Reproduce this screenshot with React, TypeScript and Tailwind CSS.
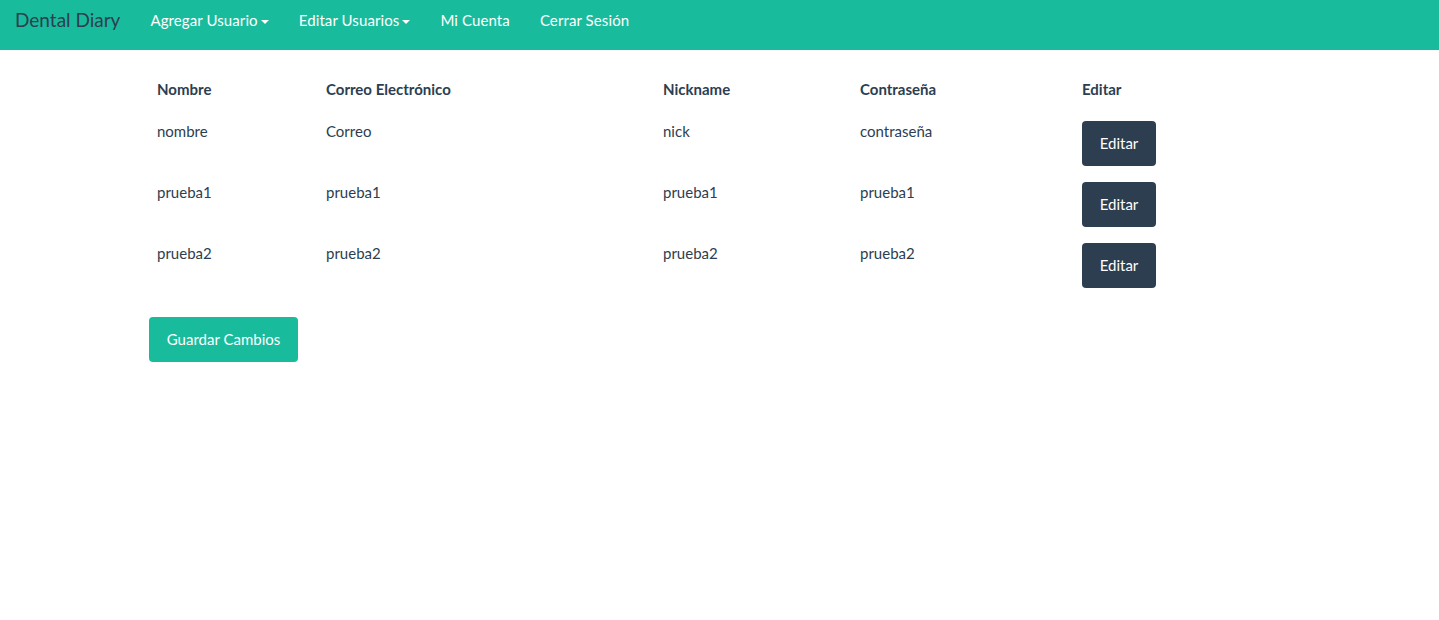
const usuarios = [
  { nombre: "nombre", correo: "Correo", nick: "nick", pass: "contraseña" },
  { nombre: "prueba1", correo: "prueba1", nick: "prueba1", pass: "prueba1" },
  { nombre: "prueba2", correo: "prueba2", nick: "prueba2", pass: "prueba2" },
];

function Caret() {
  return (
    <span className="ml-[3px] inline-block h-0 w-0 border-x-[4px] border-t-[4px] border-x-transparent border-t-white align-middle" />
  );
}

export default function App() {
  return (
    <div className="min-h-[620px] bg-white font-['Lato','Liberation_Sans',sans-serif] text-[15px] leading-[21px] text-[#2c3e50]">
      <nav className="flex h-[50px] bg-[#18bc9c]">
        <a className="block px-[15px] pt-[9px] text-[19px] leading-[22px] text-[#2c3e50]">Dental Diary</a>
        <ul className="flex tracking-[0.1px]">
          <li className="px-[15px] pt-[10px] leading-[20px] text-white">
            Agregar Usuario<Caret />
          </li>
          <li className="px-[15px] pt-[10px] leading-[20px] text-white">
            Editar Usuarios<Caret />
          </li>
          <li className="px-[15px] pt-[10px] leading-[20px] text-white">Mi Cuenta</li>
          <li className="px-[15px] pt-[10px] leading-[20px] text-white">Cerrar Sesión</li>
        </ul>
      </nav>

      <div className="mx-auto w-[1171px] px-[15px] pt-[21px]">
        <table className="mb-[21px] w-full border-collapse text-left">
          <thead>
            <tr>
              <th className="w-[169px] px-2 pb-[13px] pt-2 font-bold">Nombre</th>
              <th className="w-[337px] px-2 pb-[13px] pt-2 font-bold">Correo Electrónico</th>
              <th className="w-[197px] px-2 pb-[13px] pt-2 font-bold">Nickname</th>
              <th className="w-[222px] px-2 pb-[13px] pt-2 font-bold">Contraseña</th>
              <th className="px-2 pb-[13px] pt-2 font-bold">Editar</th>
            </tr>
          </thead>
          <tbody>
            {usuarios.map((u, i) => (
              <tr key={i}>
                <td className="px-2 py-2 align-top">{u.nombre}</td>
                <td className="px-2 py-2 align-top">{u.correo}</td>
                <td className="px-2 py-2 align-top">{u.nick}</td>
                <td className="px-2 py-2 align-top">{u.pass}</td>
                <td className="px-2 py-2 align-top">
                  <button className="h-[45px] w-[74px] rounded-[4px] bg-[#2c3e50] text-white">Editar</button>
                </td>
              </tr>
            ))}
          </tbody>
        </table>
        <button className="h-[45px] w-[149px] rounded-[4px] bg-[#18bc9c] text-white">Guardar Cambios</button>
      </div>
    </div>
  );
}
